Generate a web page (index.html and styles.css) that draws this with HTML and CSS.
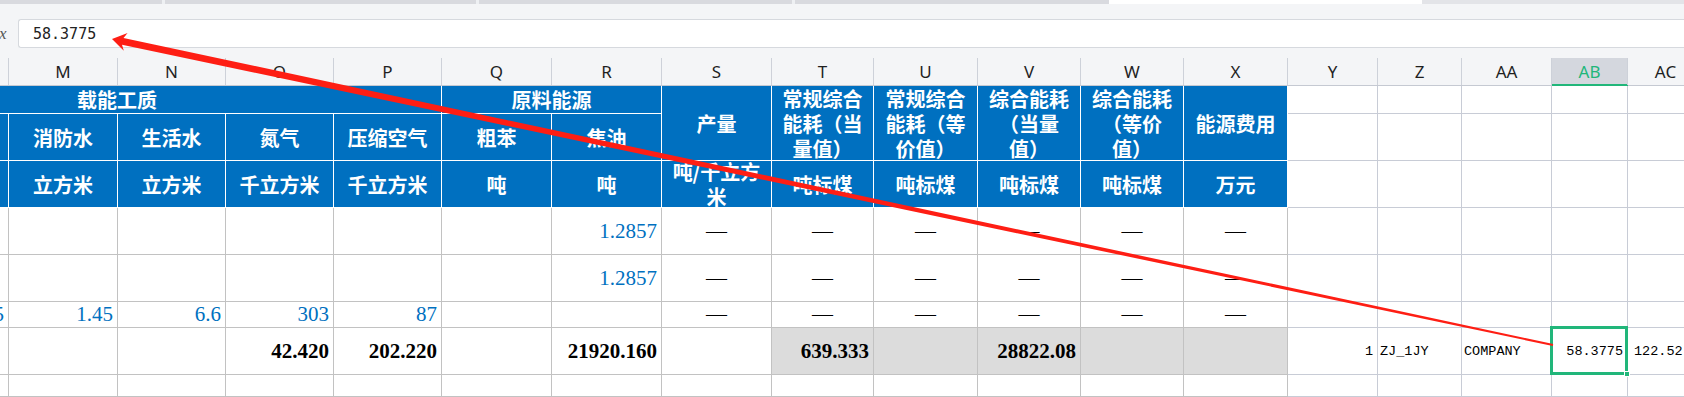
FILE: index.html
```html
<!DOCTYPE html>
<html lang="zh-CN">
<head>
<meta charset="utf-8">
<title>能源统计表</title>
<link rel="stylesheet" href="styles.css">
</head>
<body>
<div class="tabs">
  <span class="t1"></span><span class="gap"></span><span class="t2"></span><span class="gap"></span><span class="t3"></span><span class="gap"></span><span class="t4"></span><span class="t5"></span>
</div>
<div class="fbar">
  <div class="fxbox"><span class="fx">x</span></div>
  <div class="finput">58.3775</div>
</div>
<div class="colhead">
  <div class="ch"></div><div class="ch"></div><div class="ch">M</div><div class="ch">N</div><div class="ch">O</div><div class="ch">P</div><div class="ch">Q</div><div class="ch">R</div><div class="ch">S</div><div class="ch">T</div><div class="ch">U</div><div class="ch">V</div><div class="ch">W</div><div class="ch">X</div><div class="ch">Y</div><div class="ch">Z</div><div class="ch">AA</div><div class="ch ch-active">AB</div><div class="ch">AC</div>
</div>
<div class="sheet">
  <!-- header row 1 -->
  <div class="b span6">载能工质</div>
  <div class="b span2">原料能源</div>
  <div class="b rows2">产量</div>
  <div class="b rows2 top">常规综合能耗（当量值）</div>
  <div class="b rows2 top">常规综合能耗（等价值）</div>
  <div class="b rows2 top">综合能耗（当量值）</div>
  <div class="b rows2 top">综合能耗（等价值）</div>
  <div class="b rows2">能源费用</div>
  <div class="g"></div><div class="g"></div><div class="g"></div><div class="g"></div><div class="g"></div>
  <!-- header row 2 -->
  <div class="b"></div>
  <div class="b"></div>
  <div class="b">消防水</div>
  <div class="b">生活水</div>
  <div class="b">氮气</div>
  <div class="b">压缩空气</div>
  <div class="b">粗苯</div>
  <div class="b">焦油</div>
  <div class="g"></div><div class="g"></div><div class="g"></div><div class="g"></div><div class="g"></div>
  <!-- header row 3 -->
  <div class="b"></div>
  <div class="b"></div>
  <div class="b">立方米</div>
  <div class="b">立方米</div>
  <div class="b">千立方米</div>
  <div class="b">千立方米</div>
  <div class="b">吨</div>
  <div class="b">吨</div>
  <div class="b">吨/千立方米</div>
  <div class="b">吨标煤</div>
  <div class="b">吨标煤</div>
  <div class="b">吨标煤</div>
  <div class="b">吨标煤</div>
  <div class="b">万元</div>
  <div class="g"></div><div class="g"></div><div class="g"></div><div class="g"></div><div class="g"></div>
  <!-- data row 1 -->
  <div class="d"></div><div class="d"></div><div class="d"></div><div class="d"></div><div class="d"></div><div class="d"></div><div class="d"></div>
  <div class="d num blue">1.2857</div>
  <div class="d dash">—</div><div class="d dash">—</div><div class="d dash">—</div><div class="d dash">—</div><div class="d dash">—</div><div class="d dash">—</div>
  <div class="g"></div><div class="g"></div><div class="g"></div><div class="g"></div><div class="g"></div>
  <!-- data row 2 -->
  <div class="d"></div><div class="d"></div><div class="d"></div><div class="d"></div><div class="d"></div><div class="d"></div><div class="d"></div>
  <div class="d num blue">1.2857</div>
  <div class="d dash">—</div><div class="d dash">—</div><div class="d dash">—</div><div class="d dash">—</div><div class="d dash">—</div><div class="d dash">—</div>
  <div class="g"></div><div class="g"></div><div class="g"></div><div class="g"></div><div class="g"></div>
  <!-- data row 3 -->
  <div class="d"></div>
  <div class="d num blue">0.65</div>
  <div class="d num blue">1.45</div>
  <div class="d num blue">6.6</div>
  <div class="d num blue">303</div>
  <div class="d num blue">87</div>
  <div class="d"></div><div class="d"></div>
  <div class="d dash">—</div><div class="d dash">—</div><div class="d dash">—</div><div class="d dash">—</div><div class="d dash">—</div><div class="d dash">—</div>
  <div class="g"></div><div class="g"></div><div class="g"></div><div class="g"></div><div class="g"></div>
  <!-- data row 4 -->
  <div class="d"></div><div class="d"></div><div class="d"></div><div class="d"></div>
  <div class="d num bold">42.420</div>
  <div class="d num bold">202.220</div>
  <div class="d"></div>
  <div class="d num bold">21920.160</div>
  <div class="d"></div>
  <div class="d num bold shade">639.333</div>
  <div class="d shade"></div>
  <div class="d num bold shade">28822.08</div>
  <div class="d shade"></div>
  <div class="d shade"></div>
  <div class="g mono num">1</div>
  <div class="g mono left">ZJ_1JY</div>
  <div class="g mono left">COMPANY</div>
  <div class="g mono num active">58.3775<span class="sel"><span class="handle"></span></span></div>
  <div class="g mono left wide">122.52</div>
  <!-- data row 5 -->
  <div class="d"></div><div class="d"></div><div class="d"></div><div class="d"></div><div class="d"></div><div class="d"></div><div class="d"></div><div class="d"></div><div class="d"></div><div class="d"></div><div class="d"></div><div class="d"></div><div class="d"></div><div class="d"></div>
  <div class="g"></div><div class="g"></div><div class="g"></div><div class="g"></div><div class="g"></div>
</div>
<svg class="arrow" width="1684" height="397" viewBox="0 0 1684 397" aria-hidden="true">
  <polygon fill="#fe1e14" points="112,39 127.6,33.1 123.5,37.9 1553.2,344.0 1552.8,346.0 122.0,44.7 123.8,50.7"/>
</svg>
</body>
</html>
```

FILE: styles.css
```css
* { box-sizing: border-box; margin: 0; padding: 0; }

html, body {
  width: 1684px;
  height: 397px;
  overflow: hidden;
  background: #ffffff;
}

body {
  position: relative;
  font-family: "Noto Sans", "Noto Sans CJK SC", sans-serif;
  color: #222;
}

/* top tab strip */
.tabs {
  display: flex;
  height: 4px;
  background: #e3e4e8;
}
.tabs span { display: block; height: 4px; background: #d9dadf; }
.tabs .t1 { width: 162px; }
.tabs .gap { width: 3px; background: #eef0f3; }
.tabs .t2 { width: 311px; }
.tabs .t3 { width: 313px; }
.tabs .t4 { width: 314px; }
.tabs .t5 { width: 313px; background: #ffffff; }

/* formula bar */
.fbar {
  height: 44px;
  background: #f4f5f7;
  display: flex;
  align-items: flex-end;
}
.fxbox {
  width: 18px;
  height: 29px;
  display: flex;
  align-items: center;
}
.fx {
  margin-left: -1px;
  font: italic 17px "Liberation Serif", serif;
  color: #555;
}
.finput {
  flex: 1;
  height: 29px;
  background: #ffffff;
  border: 1px solid #d6d9de;
  border-right: 0;
  border-radius: 3px 0 0 3px;
  padding-left: 14px;
  display: flex;
  align-items: center;
  font: 15px "DejaVu Sans Mono", monospace;
  color: #222;
}

/* column letters */
.colhead, .sheet {
  display: grid;
  grid-template-columns: 108px 108px 109px 108px 108px 108px 110px 110px 110px 102px 104px 103px 103px 104px 90px 84px 90px 76px 76px;
  margin-left: -207px;
}
.colhead {
  height: 38px;
  background: #f4f5f7;
  border-bottom: 1px solid #c5c9d2;
  align-items: end;
}
.ch {
  height: 27px;
  border-right: 1px solid #cdd1d9;
  display: flex;
  align-items: center;
  justify-content: center;
  font-size: 17px;
  color: #1f1f1f;
}
.ch-active {
  background: #d4d7de;
  color: #21b67a;
  box-shadow: 0 1px 0 #21b67a, inset 0 -1px 0 #21b67a;
}

/* sheet */
.sheet {
  grid-template-rows: 28px 47px 47px 47px 47px 26px 47px 22px;
}
.b {
  background: #0070c0;
  color: #ffffff;
  border-right: 1px solid #ffffff;
  border-bottom: 1px solid #ffffff;
  display: flex;
  align-items: center;
  justify-content: center;
  text-align: center;
  padding: 0 3px;
  overflow: hidden;
  font: 700 20px/25px "Noto Sans CJK SC", sans-serif;
  text-spacing-trim: space-all;
}
.b.top { align-items: flex-start; }
.span6 { grid-column: span 6; }
.span2 { grid-column: span 2; }
.rows2 { grid-row: span 2; }

.g {
  border-right: 1px solid #c8ccd6;
  border-bottom: 1px solid #c8ccd6;
  display: flex;
  align-items: center;
  padding: 0 4px;
  white-space: nowrap;
  overflow: hidden;
}
.d {
  border-right: 1px solid #c2c2c2;
  border-bottom: 1px solid #c2c2c2;
  display: flex;
  align-items: center;
  padding: 0 4px;
  white-space: nowrap;
  overflow: hidden;
  font: 21px "Liberation Serif", serif;
  color: #000;
}
.num { justify-content: flex-end; }
.blue { color: #0070c0; }
.bold { font-weight: 700; }
.dash { justify-content: center; }
.shade { background: #dcdcdc; }

.mono {
  font: 13.5px "Liberation Mono", monospace;
  color: #000;
}
.left { justify-content: flex-start; padding-left: 2px; }
.wide { padding-left: 6px; }

.active { position: relative; overflow: visible; }
.sel {
  position: absolute;
  top: -2px;
  left: -2px;
  right: -1px;
  bottom: -1px;
  border: 3px solid #21b67a;
  pointer-events: none;
}
.handle {
  position: absolute;
  right: -5px;
  bottom: -5px;
  width: 6px;
  height: 6px;
  background: #21b67a;
  border: 1px solid #ffffff;
}

/* annotation arrow */
.arrow {
  position: absolute;
  top: 0;
  left: 0;
  pointer-events: none;
}
```
